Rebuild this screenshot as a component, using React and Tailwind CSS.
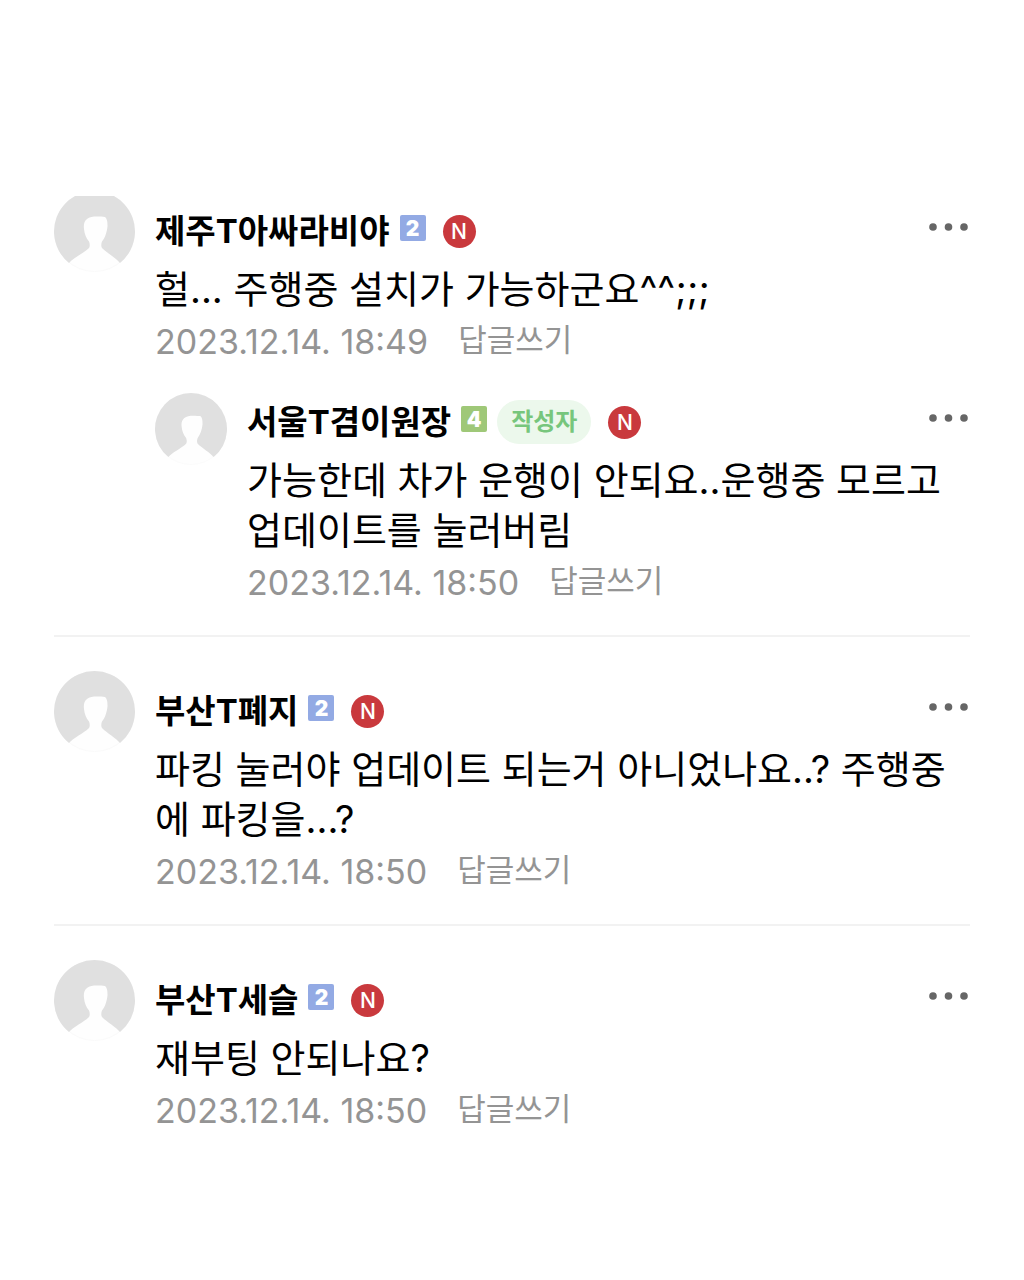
import React from 'react';

const comments = [
  {
    id: 1,
    name: '제주T아싸라비야',
    level: 2,
    text: '헐... 주행중 설치가 가능하군요^^;;;',
    date: '2023.12.14. 18:49',
    replies: [
      {
        id: 2,
        name: '서울T겸이원장',
        level: 4,
        isAuthor: true,
        text: '가능한데 차가 운행이 안되요..운행중 모르고 업데이트를 눌러버림',
        date: '2023.12.14. 18:50',
      },
    ],
  },
  {
    id: 3,
    name: '부산T폐지',
    level: 2,
    text: '파킹 눌러야 업데이트 되는거 아니었나요..? 주행중에 파킹을...?',
    date: '2023.12.14. 18:50',
  },
  {
    id: 4,
    name: '부산T세슬',
    level: 2,
    text: '재부팅 안되나요?',
    date: '2023.12.14. 18:50',
  },
];

const levelColors = {
  2: 'bg-[#93aae4]',
  4: 'bg-[#9fc878]',
};

function Avatar({ className }) {
  return (
    <svg viewBox="0 0 81 81" className={`shrink-0 ${className}`} aria-hidden="true">
      <circle cx="40.5" cy="40.5" r="40" fill="#fefefe" stroke="#fafafa" />
      <path
        d="M15 72A40.5 40.5 0 1 1 66 72C62 67 53 62 48 57C47 55.500 47 53 48 50.500C51 47 53 41 53.500 35C53.500 30 53 28 51 26C46 25.500 37 24.500 33 28C30 30.500 29.500 34 30 38C30.500 43 32 47 35 50.500C36 53 36 55.500 35 57C30 62 19 67 15 72Z"
        fill="#e0e0e0"
      />
    </svg>
  );
}

function MenuButton() {
  return (
    <button type="button" aria-label="더보기" className="ml-auto mb-2 shrink-0 px-0.5 py-3">
      <svg width="39" height="8" viewBox="0 0 39 8" fill="#666">
        <circle cx="4" cy="4" r="3.8" />
        <circle cx="19.500" cy="4" r="3.8" />
        <circle cx="35" cy="4" r="3.8" />
      </svg>
    </button>
  );
}

function CommentBody({ comment, className }) {
  return (
    <div className={`min-w-0 flex-1 ${className}`}>
      <div className="flex h-12 items-center">
        <strong className="text-[33px] leading-[48px] font-bold text-black">{comment.name}</strong>
        <span
          className={`mb-1.5 ml-2.5 flex size-[26px] items-center justify-center rounded-xs text-[21px] leading-none font-black text-white ${levelColors[comment.level]}`}
        >
          {comment.level}
        </span>
        {comment.isAuthor && (
          <span className="ml-2.5 flex h-11 items-center rounded-full bg-[#ecf8ec] px-3.5 text-[24px] leading-none font-bold text-[#77c67c]">
            작성자
          </span>
        )}
        <span className="ml-[17px] flex size-[33px] items-center justify-center rounded-full bg-[#c9393d] text-[21px] leading-none font-medium text-white">
          N
        </span>
        <MenuButton />
      </div>
      <p className="mt-[9px] text-[38px] leading-[50px] break-all text-black">{comment.text}</p>
      <div className="flex h-14 items-center gap-7.5 text-[#949494]">
        <time className="text-[34px] leading-[50px]">{comment.date}</time>
        <button type="button" className="mb-1 text-[31px] leading-[50px]">
          답글쓰기
        </button>
      </div>
    </div>
  );
}

export default function App() {
  return (
    <main className="overflow-hidden bg-white pr-[54px] pl-[54px] font-[Inter,'Noto_Sans_CJK_KR',sans-serif]">
      <div className="mt-[196px] overflow-hidden">
        {/* the list is scrolled a little, so the first avatar is cut at the top */}
        <ul className="-mt-[5px]">
          {comments.map(comment => (
            <li
              key={comment.id}
              className="border-[#f2f2f2] pb-6 not-first:border-t-2 not-first:pt-[34px]"
            >
              <article className="flex gap-5">
                <Avatar className="size-[81px]" />
                <CommentBody comment={comment} className="pt-4" />
              </article>
              {comment.replies && (
                <ul className="mt-[23px] pl-[101px]">
                  {comment.replies.map(reply => (
                    <li key={reply.id} className="flex gap-5">
                      <Avatar className="size-[72px]" />
                      <CommentBody comment={reply} className="pt-[5px]" />
                    </li>
                  ))}
                </ul>
              )}
            </li>
          ))}
        </ul>
      </div>
    </main>
  );
}
